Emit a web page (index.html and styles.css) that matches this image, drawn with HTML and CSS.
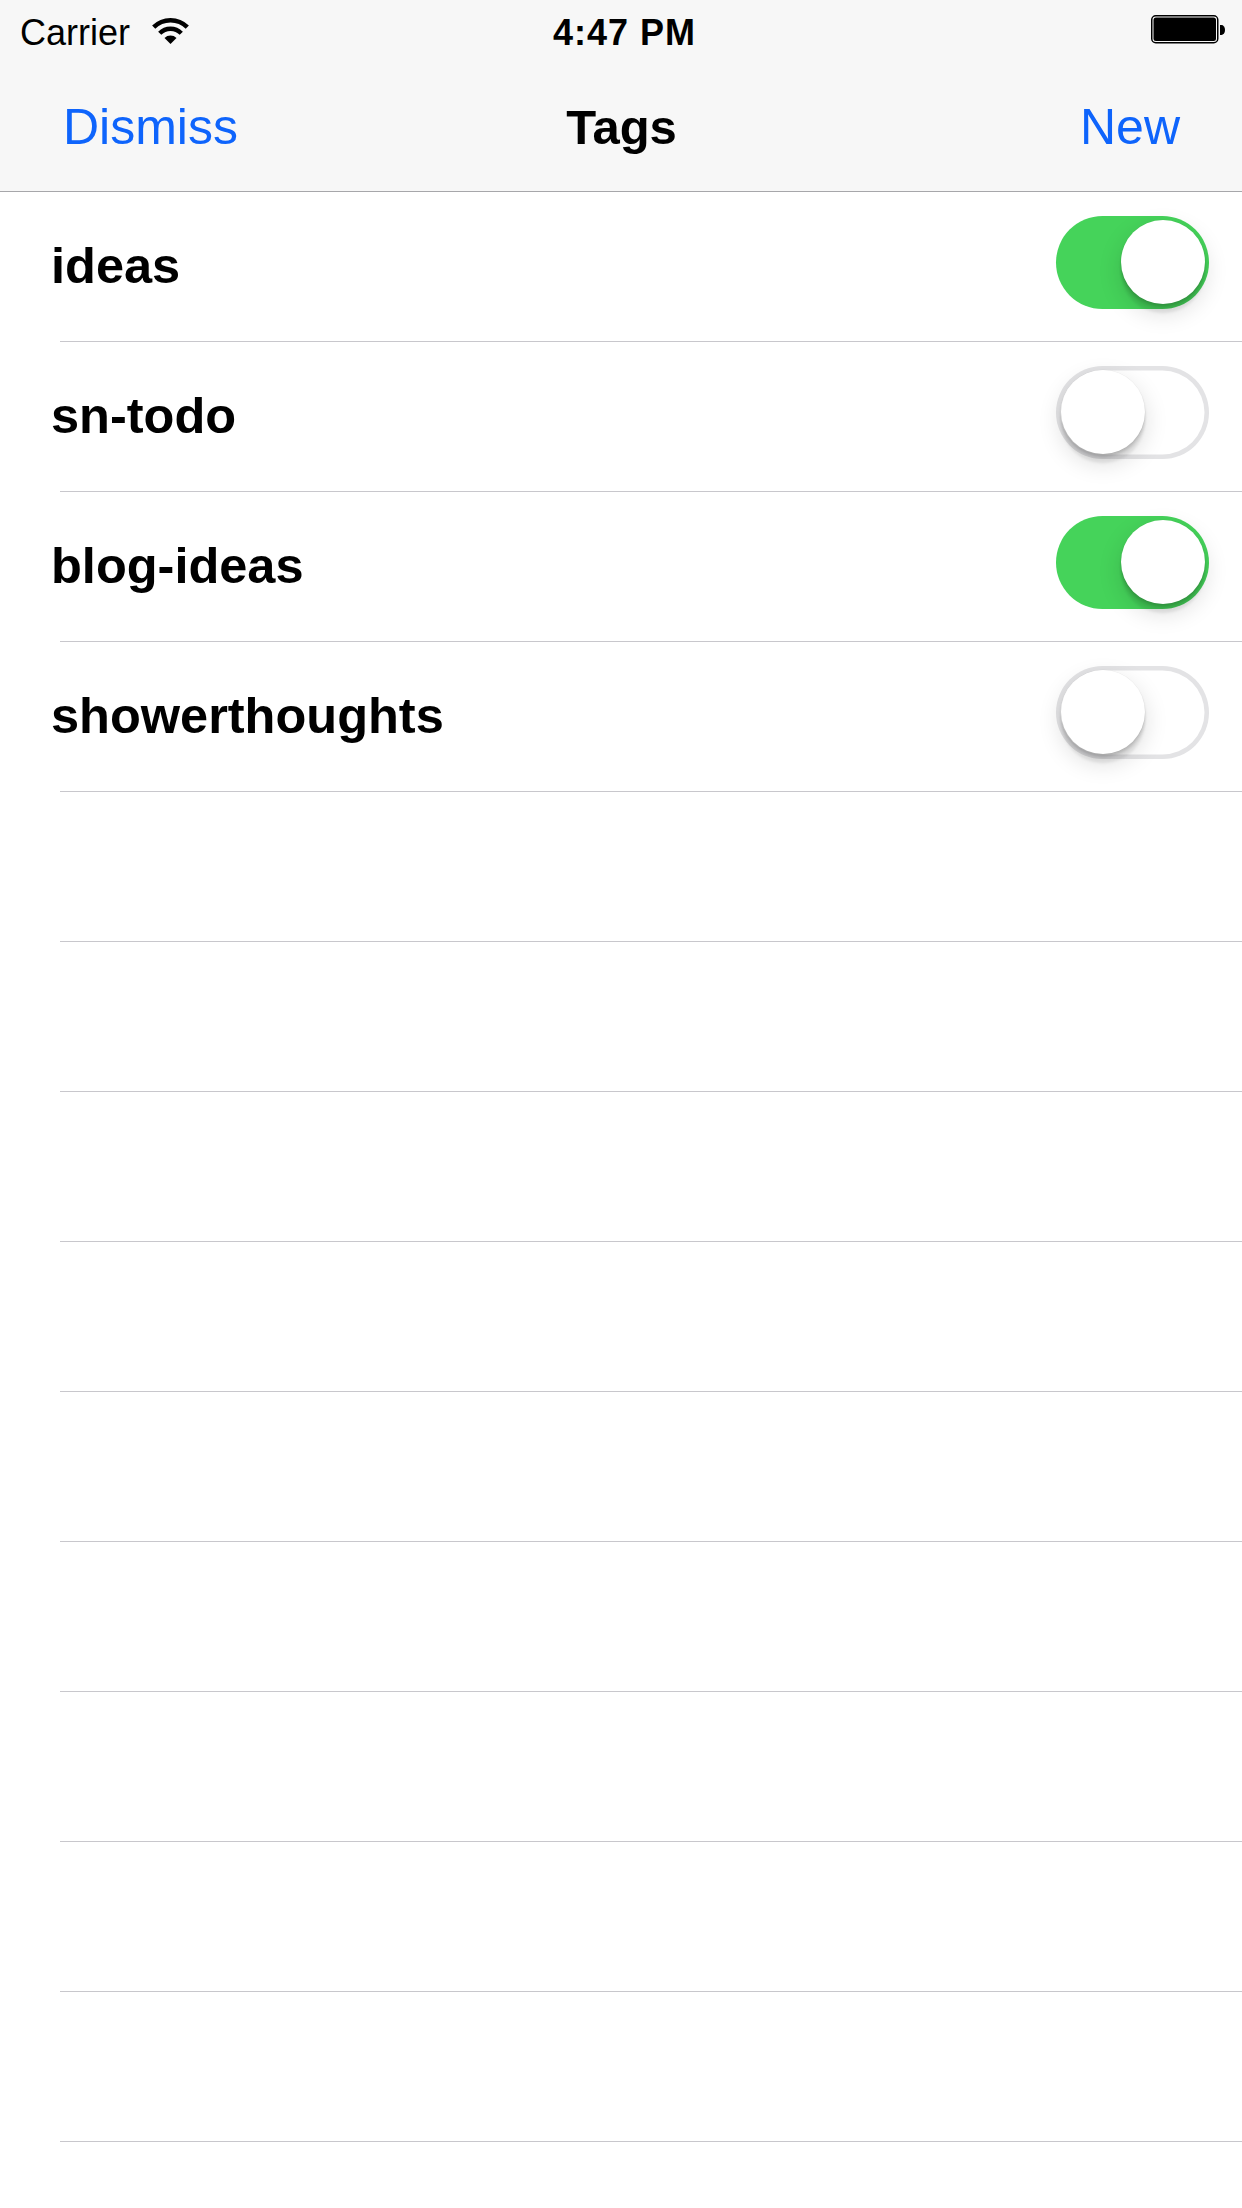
FILE: index.html
```html
<!DOCTYPE html>
<html lang="en">
<head>
<meta charset="utf-8">
<title>Tags</title>
<link rel="stylesheet" href="styles.css">
</head>
<body>
<div class="screen">
  <header class="statusbar">
    <div class="sb-left">
      <span class="carrier">Carrier</span>
      <svg class="wifi" width="37" height="26" viewBox="0 0 37 26">
        <path d="M1.71 9.21 A23.75 23.75 0 0 1 35.29 9.21" fill="none" stroke="#000" stroke-width="4.5"/>
        <path d="M7.72 15.22 A15.25 15.25 0 0 1 29.28 15.22" fill="none" stroke="#000" stroke-width="4.5"/>
        <path d="M18.5 26 L12.49 19.99 A8.5 8.5 0 0 1 24.51 19.99 Z" fill="#000"/>
      </svg>
    </div>
    <div class="sb-time">4:47 PM</div>
    <div class="sb-right">
      <svg class="battery" width="74" height="30" viewBox="0 0 74 30">
        <rect x="0.75" y="0.75" width="66" height="27" rx="4" ry="4" fill="none" stroke="#000" stroke-width="1.5"/>
        <rect x="2.5" y="2.5" width="62.5" height="23.5" rx="2.5" ry="2.5" fill="#000"/>
        <path d="M69 10 H70.5 A3.5 5 0 0 1 70.5 20 H69 Z" fill="#000"/>
      </svg>
    </div>
  </header>

  <nav class="navbar">
    <span class="nav-btn">Dismiss</span>
    <span class="nav-title">Tags</span>
    <span class="nav-btn nav-btn-right">New</span>
  </nav>

  <main class="list">
    <div class="cell">
      <span class="cell-label">ideas</span>
      <span class="switch switch-on"><span class="knob"></span></span>
    </div>
    <div class="cell">
      <span class="cell-label">sn-todo</span>
      <span class="switch"><span class="knob"></span></span>
    </div>
    <div class="cell">
      <span class="cell-label">blog-ideas</span>
      <span class="switch switch-on"><span class="knob"></span></span>
    </div>
    <div class="cell">
      <span class="cell-label">showerthoughts</span>
      <span class="switch"><span class="knob"></span></span>
    </div>
    <div class="cell"></div>
    <div class="cell"></div>
    <div class="cell"></div>
    <div class="cell"></div>
    <div class="cell"></div>
    <div class="cell"></div>
    <div class="cell"></div>
    <div class="cell"></div>
    <div class="cell"></div>
    <div class="cell"></div>
  </main>
</div>
</body>
</html>
```

FILE: styles.css
```css
* {
  box-sizing: border-box;
}

html, body {
  margin: 0;
  padding: 0;
  background: #ffffff;
}

body {
  font-family: "Liberation Sans", Arial, sans-serif;
  color: #000;
  overflow: hidden;
}

.screen {
  width: 1242px;
  height: 2208px;
  overflow: hidden;
  background: #ffffff;
}

/* Status bar */
.statusbar {
  height: 60px;
  background: #f7f7f7;
  display: grid;
  grid-template-columns: 1fr auto 1fr;
  align-items: center;
  padding: 5px 17px 0 20px;
}

.sb-left {
  display: flex;
  align-items: center;
  gap: 22px;
}

.carrier {
  font-size: 36px;
  line-height: 42px;
}

.wifi {
  display: block;
  margin-top: -4px;
}

.sb-time {
  font-size: 36px;
  font-weight: bold;
  line-height: 42px;
  letter-spacing: 1px;
  margin-left: 4px;
}

.sb-right {
  display: flex;
  justify-content: flex-end;
}

.battery {
  display: block;
  margin-top: -6px;
}

/* Navigation bar */
.navbar {
  height: 132px;
  background: #f7f7f7;
  border-bottom: 1px solid #a7a7aa;
  display: grid;
  grid-template-columns: 1fr auto 1fr;
  align-items: center;
  padding: 2px 62px 0 63px;
}

.nav-btn {
  font-size: 50px;
  color: #0e64fc;
  justify-self: start;
}

.nav-btn-right {
  justify-self: end;
}

.nav-title {
  font-size: 49px;
  font-weight: bold;
}

/* List */
.list {
  display: flex;
  flex-direction: column;
}

.cell {
  height: 150px;
  flex: none;
  display: flex;
  align-items: center;
  justify-content: space-between;
  padding: 0 33px 1px 51px;
  background: linear-gradient(#c8c7cc, #c8c7cc) no-repeat 60px 100% / calc(100% - 60px) 1px;
}

.cell-label {
  font-size: 50.5px;
  font-weight: bold;
  line-height: 58px;
  margin-top: -1px;
}

/* Switch */
.switch {
  width: 153px;
  height: 93px;
  border-radius: 46.5px;
  padding: 4.5px;
  display: flex;
  justify-content: flex-start;
  margin-bottom: 9px;
  background: #ffffff;
  box-shadow: inset 0 0 0 4.5px #e3e3e5;
}

.switch-on {
  background: #45d35a;
  box-shadow: none;
  justify-content: flex-end;
}

.knob {
  width: 84px;
  height: 84px;
  border-radius: 50%;
  background: #ffffff;
  box-shadow:
    0 0 0 0.5px rgba(0, 0, 0, 0.04),
    0 3px 3px rgba(0, 0, 0, 0.14),
    0 9px 3px rgba(0, 0, 0, 0.08),
    0 9px 24px rgba(0, 0, 0, 0.14);
}
```
